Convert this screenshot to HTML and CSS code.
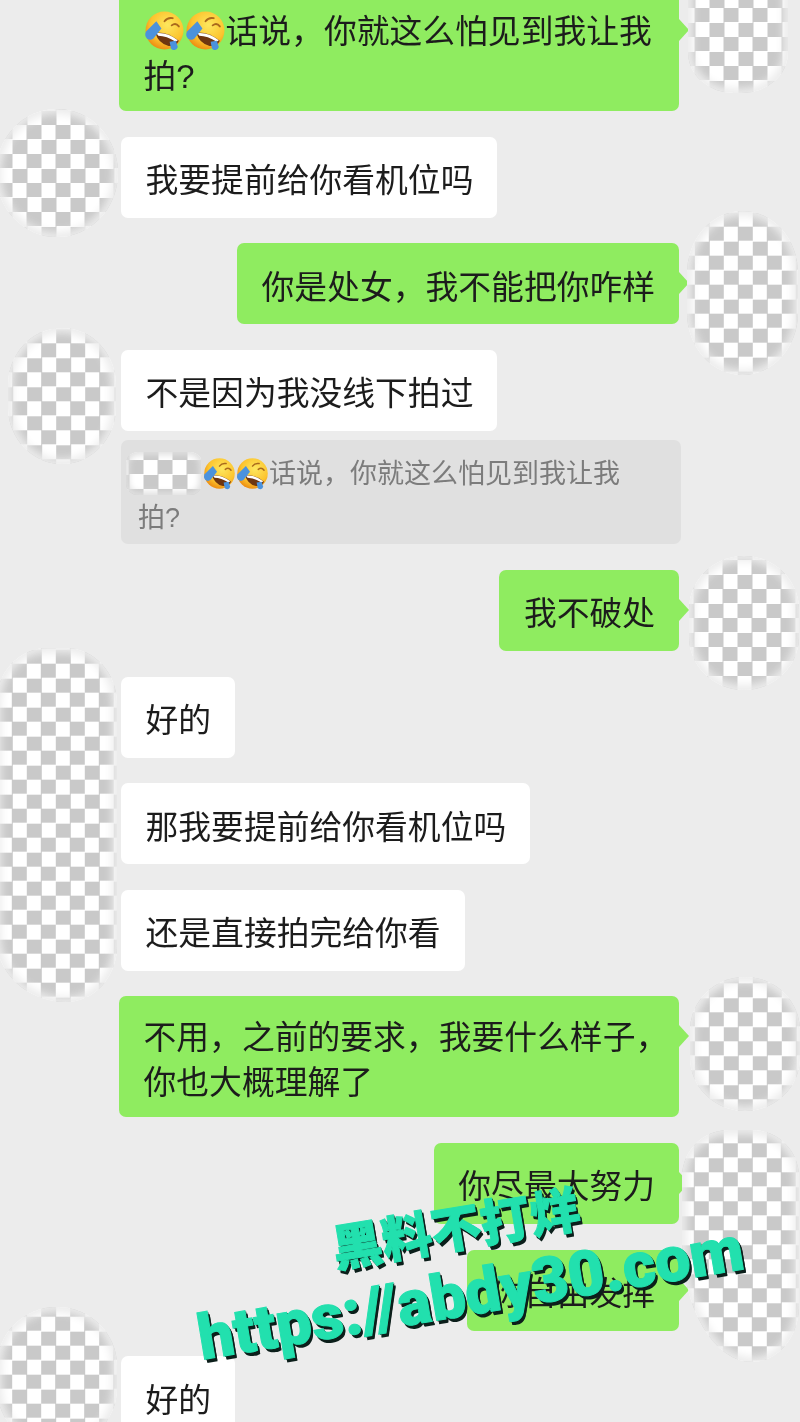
FILE: index.html
```html
<!DOCTYPE html>
<html lang="zh-CN">
<head>
    <meta charset="UTF-8">
    <meta name="viewport" content="width=device-width, initial-scale=1.0">
    <title>聊天记录</title>
    <link rel="stylesheet" href="styles.css">
</head>
<body>
    <svg class="defs" width="0" height="0" aria-hidden="true">
        <defs>
            <radialGradient id="face" cx="58%" cy="35%" r="68%">
                <stop offset="0%" stop-color="#fde75e"/>
                <stop offset="65%" stop-color="#fcc42e"/>
                <stop offset="100%" stop-color="#ec8a10"/>
            </radialGradient>
            <symbol id="laugh" viewBox="0 0 40 40">
                <circle cx="20" cy="20" r="18.500" fill="url(#face)"/>
                <path d="M20 11q3-4 8-3M27 15q4-3 7 1" fill="none" stroke="#a9691c" stroke-width="1.800" stroke-linecap="round"/>
                <path d="M11 22q12-1 23 8q-3 6-10 5q-10-2-13-13z" fill="#6e3510"/>
                <path d="M12 22.500q11-1 21 7l-2 1.500q-9-6-17-6z" fill="#fff"/>
                <path d="M12 11l5 7-8 10q-3 2-6 0q-3-3-1-7z" fill="#4b92dd"/>
                <path d="M25 31l6-1 2 6q-1 3-3 3q-4 0-4-3z" fill="#4b92dd"/>
            </symbol>
        </defs>
    </svg>

    <main class="chat">
        <div class="bubble me wide">
            <span class="line"><svg class="emoji"><use href="#laugh"/></svg><svg class="emoji"><use href="#laugh"/></svg>话说，你就这么怕见到我让我</span>
            <span class="line">拍?</span>
        </div>
        <div class="bubble">我要提前给你看机位吗</div>
        <div class="bubble me">你是处女，我不能把你咋样</div>
        <div class="bubble">不是因为我没线下拍过</div>
        <div class="quote">
            <span class="line"><span class="quote-name checker"></span><svg class="emoji small"><use href="#laugh"/></svg><svg class="emoji small"><use href="#laugh"/></svg>话说，你就这么怕见到我让我</span>
            <span class="line">拍?</span>
        </div>
        <div class="bubble me">我不破处</div>
        <div class="bubble">好的</div>
        <div class="bubble">那我要提前给你看机位吗</div>
        <div class="bubble">还是直接拍完给你看</div>
        <div class="bubble me wide">
            <span class="line">不用，之前的要求，我要什么样子，</span>
            <span class="line">你也大概理解了</span>
        </div>
        <div class="bubble me">你尽最大努力</div>
        <div class="bubble me">你自由发挥</div>
        <div class="bubble">好的</div>
    </main>

    <!-- 头像打码 -->
    <div class="patch checker patch-a"></div>
    <div class="patch checker patch-b"></div>
    <div class="patch checker patch-c"></div>
    <div class="patch checker patch-d"></div>
    <div class="patch checker patch-e"></div>
    <div class="patch checker patch-f"></div>
    <div class="patch checker patch-g"></div>
    <div class="patch checker patch-h"></div>
    <div class="patch checker patch-i"></div>

    <div class="watermark">
        <div class="mark-title">黑料不打烊</div>
        <div class="mark-url">https://abdy30.com</div>
    </div>
</body>
</html>
```

FILE: styles.css
```css
* {
    margin: 0;
    padding: 0;
    box-sizing: border-box;
}

html,
body {
    height: 1422px;
    overflow: hidden;
}

body {
    position: relative;
    font-family: "Liberation Sans", "Noto Sans CJK SC", sans-serif;
    background: #ececec;
    color: #1c1c1c;
}

.defs {
    position: absolute;
}

.chat {
    display: flex;
    flex-direction: column;
    align-items: flex-start;
    gap: 25.6px;
    margin-top: -10px;
    padding: 0 121px;
    filter: blur(0.35px);
}

.bubble {
    position: relative;
    display: flex;
    flex-direction: column;
    justify-content: center;
    flex: none;
    min-height: 81px;
    padding: 19px 23.9px 12px 24.5px;
    border-radius: 7px;
    background: #fff;
    font-size: 32.8px;
    line-height: 45px;
    white-space: nowrap;
}

.bubble.me {
    align-self: flex-end;
    background: #8fec60;
}

.bubble.me::after {
    content: "";
    position: absolute;
    top: 29px;
    right: -10px;
    border-left: 10px solid #8fec60;
    border-top: 11px solid transparent;
    border-bottom: 11px solid transparent;
}

.bubble.wide {
    width: 560px;
}

.line {
    display: block;
}

.emoji {
    width: 41px;
    height: 41px;
    vertical-align: -8px;
}

.emoji.small {
    width: 33px;
    height: 33px;
    vertical-align: -7px;
}

/* 引用 */
.quote {
    flex: none;
    width: 560px;
    height: 104px;
    margin: -16.5px 0 0.5px;
    padding: 12px 17px 9px;
    border-radius: 7px;
    background: #e0e0e0;
    color: #7c7c7c;
    font-size: 27px;
    line-height: 44px;
    white-space: nowrap;
}

.quote-name {
    display: inline-block;
    width: 76px;
    height: 43px;
    margin: 0 1px 0 -12px;
    vertical-align: -12px;
    border-radius: 12px;
    background-position: -11.5px 8px;
    box-shadow: inset 0 0 6px 3px #e0e0e0;
}

/* 棋盘格 */
.checker {
    background-color: #fff;
    background-image: conic-gradient(#c9c9c9 25%, #fff 0 50%, #c9c9c9 0 75%, #fff 0);
    background-size: 29px 29px;
}

.patch {
    position: absolute;
    box-shadow: inset 0 0 8px 5px #ececec;
    filter: blur(0.5px);
}

.patch-a {
    left: 688px;
    top: -14px;
    width: 100px;
    height: 107px;
    border-radius: 0 0 46% 46% / 0 0 38% 38%;
    background-position: -7.5px 22px;
}

.patch-b {
    left: -4px;
    top: 109px;
    width: 122px;
    height: 128px;
    border-radius: 50%;
    background-position: 16.500px 16px;
}

.patch-c {
    left: 687px;
    top: 211px;
    width: 111px;
    height: 164px;
    border-radius: 50% / 38%;
    background-position: 7.800px 15.700px;
}

.patch-d {
    left: 8px;
    top: 328px;
    width: 108px;
    height: 136px;
    border-radius: 50% / 42%;
    background-position: 19.200px 15.300px;
}

.patch-e {
    left: 689px;
    top: 556px;
    width: 110px;
    height: 134px;
    border-radius: 50% / 40%;
    background-position: 19.500px 4px;
}

.patch-f {
    left: -4px;
    top: 648px;
    width: 121px;
    height: 354px;
    border-radius: 55px 55px 55px 75px / 60px 60px 60px 70px;
    background-position: 1.800px 73.700px;
}

.patch-g {
    left: 690px;
    top: 977px;
    width: 110px;
    height: 134px;
    border-radius: 50% / 40%;
    background-position: 4.800px 6.300px;
}

.patch-h {
    left: 682px;
    top: 1130px;
    width: 117px;
    height: 232px;
    border-radius: 50px 50px 50px 75px / 50px 50px 60px 130px;
    background-position: 26.800px 13.300px;
}

.patch-i {
    left: -3px;
    top: 1307px;
    width: 120px;
    height: 140px;
    border-radius: 50% / 42%;
    background-position: 15.200px 9.700px;
}

/* 水印 */
.watermark {
    position: absolute;
    left: 166px;
    top: 1200px;
    width: 600px;
    transform: rotate(-9.5deg);
    text-align: center;
    color: #22e0ae;
    font-family: Roboto, "Noto Sans CJK SC", sans-serif;
    font-weight: 900;
    -webkit-text-stroke: 1px #22e0ae;
    text-shadow: 1px 1px 0 #0c1f1b, 2px 3px 0 #0c1f1b, 2px 4px 0 #0c1f1b;
}

.mark-title {
    font-size: 50px;
    line-height: 58px;
    margin-left: -8px;
}

.mark-url {
    font-size: 62.8px;
    line-height: 72px;
    white-space: nowrap;
}
```
